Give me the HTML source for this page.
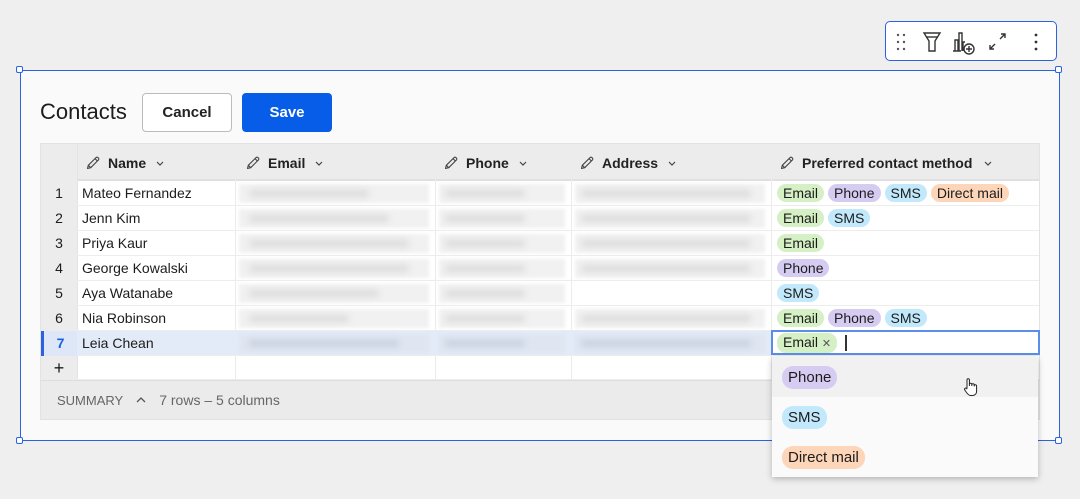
<!DOCTYPE html>
<html><head><style>
*{box-sizing:border-box;margin:0;padding:0}
body{width:1080px;height:499px;background:#efefef;font-family:"Liberation Sans",sans-serif;position:relative;overflow:hidden;color:#1c1c1c}
.card{position:absolute;left:20px;top:70px;width:1040px;height:371px;background:#fafafa;border:1px solid #2a62e0}
.h{position:absolute;width:7px;height:7px;border:1px solid #2a62e0;background:#fff;border-radius:2px}
.tb{position:absolute;left:885px;top:21px;width:172px;height:40px;background:#fff;border:1px solid #2a62e0;border-radius:5px}
.abs{position:absolute}
.title{left:40px;top:99px;font-size:22px;color:#1c1c1c}
.btn{top:93px;height:39px;border-radius:4px;font-size:15px;font-weight:bold;display:flex;align-items:center;justify-content:center}
.grid{position:absolute;left:40px;top:143px;width:1000px;height:277px;background:#fff;border:1px solid #e2e2e2}
.hdr{position:absolute;left:0;top:0;width:998px;height:37px;background:#ececec;border-bottom:2px solid #e0e0e0}
.hc{position:absolute;top:0;height:37px;display:flex;align-items:center;font-size:14px;font-weight:bold;color:#222}
.hc svg{margin-right:7px}
.hc .cv{margin-left:9px;margin-right:0}
.vl{position:absolute;top:0;width:1px;height:236px;background:#ececec}
.rn{position:absolute;left:0;width:36px;background:#ececec;text-align:center;font-size:14px}
.row{position:absolute;left:0;width:998px;height:25px;border-bottom:1px solid #ededed}
.cell{position:absolute;font-size:14px;line-height:25px}
.bl{position:absolute;height:19px;background:#f1f1f1;filter:blur(1.5px)}
.bl i{position:absolute;top:6px;height:7px;background:#dcdcdc;filter:blur(3px);border-radius:3px}
.t{display:inline-block;font-size:14px;line-height:18px;padding:0 6px;border-radius:9px;margin-right:4px}
.e{background:#d4f0c4}.p{background:#d6ccf2}.s{background:#c1e8fb}.d{background:#fdd5b8}
.sum{position:absolute;left:0;top:236px;width:998px;height:39px;background:#ebebeb;border-top:1px solid #ddd;font-size:14px;color:#666;display:flex;align-items:center}
.dd{position:absolute;left:772px;top:357px;width:266px;height:120px;background:#fafafa;box-shadow:0 2px 6px rgba(0,0,0,.25)}
.it{height:40px;display:flex;align-items:center;padding-left:10px}
.it .t{font-size:15px;line-height:23px;border-radius:11px;padding:0 6px}
</style></head><body>
<svg width="0" height="0" style="position:absolute"><defs>
<symbol id="pen" viewBox="0 0 16 16"><path d="M2.5 13.5l.8-3.2L11 2.6a1.4 1.4 0 012 0l.4.4a1.4 1.4 0 010 2L5.7 12.7zM10 3.6l2.4 2.4M3.3 10.3l2.4 2.4" fill="none" stroke="#444" stroke-width="1.1" stroke-linejoin="round"/></symbol>
<symbol id="cv" viewBox="0 0 10 10"><path d="M2 4l3 3 3-3" fill="none" stroke="#444" stroke-width="1.2"/></symbol>
</defs></svg>
<div class="card"></div>
<div class="h" style="left:16px;top:66px"></div><div class="h" style="left:1055px;top:66px"></div>
<div class="h" style="left:16px;top:437px"></div><div class="h" style="left:1055px;top:437px"></div>
<div class="tb">
<svg width="172" height="40" viewBox="0 0 172 40" fill="none" stroke="#333" stroke-width="1.4">
<g fill="#555" stroke="none"><circle cx="12" cy="13" r="1.2"/><circle cx="18" cy="13" r="1.2"/><circle cx="12" cy="20" r="1.2"/><circle cx="18" cy="20" r="1.2"/><circle cx="12" cy="27" r="1.2"/><circle cx="18" cy="27" r="1.2"/></g>
<path d="M38 11h16l-5 8v10h-6V19z"/><path d="M40 15h12"/>
<path d="M69 29V18h3v11M73 29V11h3v18M77 29v-9h2M67 29h8"/><circle cx="83" cy="27" r="5"/><path d="M83 24v6M80 27h6"/>
<path d="M109 22l-5 5M104 23v4h4M114 17l5-5M115 12h4v4"/>
<g fill="#333" stroke="none"><circle cx="150" cy="13" r="1.4"/><circle cx="150" cy="20" r="1.4"/><circle cx="150" cy="27" r="1.4"/></g>
</svg></div>
<div class="abs title">Contacts</div>
<div class="abs btn" style="left:142px;width:90px;border:1px solid #bbb;background:#fff;color:#222">Cancel</div>
<div class="abs btn" style="left:242px;width:90px;background:#075de8;color:#fff">Save</div>
<div class="grid">
<div class="hdr"></div>
<div class="vl" style="left:36px;background:#e4e4e4"></div>
<div class="vl" style="left:194px"></div><div class="vl" style="left:394px"></div><div class="vl" style="left:530px"></div><div class="vl" style="left:730px"></div>
<div class="rn" style="top:0;height:236px"></div>
<div class="hc" style="left:44px"><svg width="16" height="16"><use href="#pen"/></svg>Name<svg class="cv" width="10" height="10"><use href="#cv"/></svg></div>
<div class="hc" style="left:204px"><svg width="16" height="16"><use href="#pen"/></svg>Email<svg class="cv" width="10" height="10"><use href="#cv"/></svg></div>
<div class="hc" style="left:402px"><svg width="16" height="16"><use href="#pen"/></svg>Phone<svg class="cv" width="10" height="10"><use href="#cv"/></svg></div>
<div class="hc" style="left:538px"><svg width="16" height="16"><use href="#pen"/></svg>Address<svg class="cv" width="10" height="10"><use href="#cv"/></svg></div>
<div class="hc" style="left:738px"><svg width="16" height="16"><use href="#pen"/></svg>Preferred contact method<svg class="cv" width="10" height="10" style="margin-left:11px"><use href="#cv"/></svg></div>

<div class="row" style="top:37px"><div class="rn" style="line-height:25px">1</div><div class="cell" style="left:41px">Mateo Fernandez</div><div class="bl" style="left:198px;top:3px;width:190px"><i style="left:10px;width:120px"></i></div><div class="bl" style="left:398px;top:3px;width:126px"><i style="left:6px;width:80px"></i></div><div class="bl" style="left:534px;top:3px;width:190px"><i style="left:6px;width:170px"></i></div><div class="cell" style="left:736px"><span class="t e">Email</span><span class="t p">Phone</span><span class="t s">SMS</span><span class="t d">Direct mail</span></div></div>
<div class="row" style="top:62px"><div class="rn" style="line-height:25px">2</div><div class="cell" style="left:41px">Jenn Kim</div><div class="bl" style="left:198px;top:3px;width:190px"><i style="left:10px;width:140px"></i></div><div class="bl" style="left:398px;top:3px;width:126px"><i style="left:6px;width:80px"></i></div><div class="bl" style="left:534px;top:3px;width:190px"><i style="left:6px;width:170px"></i></div><div class="cell" style="left:736px"><span class="t e">Email</span><span class="t s">SMS</span></div></div>
<div class="row" style="top:87px"><div class="rn" style="line-height:25px">3</div><div class="cell" style="left:41px">Priya Kaur</div><div class="bl" style="left:198px;top:3px;width:190px"><i style="left:10px;width:160px"></i></div><div class="bl" style="left:398px;top:3px;width:126px"><i style="left:6px;width:80px"></i></div><div class="bl" style="left:534px;top:3px;width:190px"><i style="left:6px;width:170px"></i></div><div class="cell" style="left:736px"><span class="t e">Email</span></div></div>
<div class="row" style="top:112px"><div class="rn" style="line-height:25px">4</div><div class="cell" style="left:41px">George Kowalski</div><div class="bl" style="left:198px;top:3px;width:190px"><i style="left:10px;width:160px"></i></div><div class="bl" style="left:398px;top:3px;width:126px"><i style="left:6px;width:80px"></i></div><div class="bl" style="left:534px;top:3px;width:190px"><i style="left:6px;width:170px"></i></div><div class="cell" style="left:736px"><span class="t p">Phone</span></div></div>
<div class="row" style="top:137px"><div class="rn" style="line-height:25px">5</div><div class="cell" style="left:41px">Aya Watanabe</div><div class="bl" style="left:198px;top:3px;width:190px"><i style="left:10px;width:130px"></i></div><div class="bl" style="left:398px;top:3px;width:126px"><i style="left:6px;width:80px"></i></div><div class="cell" style="left:736px"><span class="t s">SMS</span></div></div>
<div class="row" style="top:162px"><div class="rn" style="line-height:25px">6</div><div class="cell" style="left:41px">Nia Robinson</div><div class="bl" style="left:198px;top:3px;width:190px"><i style="left:10px;width:100px"></i></div><div class="bl" style="left:398px;top:3px;width:126px"><i style="left:6px;width:80px"></i></div><div class="bl" style="left:534px;top:3px;width:190px"><i style="left:6px;width:170px"></i></div><div class="cell" style="left:736px"><span class="t e">Email</span><span class="t p">Phone</span><span class="t s">SMS</span></div></div>
<div class="row" style="top:187px;background:#e3ebf8"><div class="rn" style="line-height:25px;background:#dde7f7;color:#1a5fe0;font-weight:bold;border-left:3px solid #2a62e0">7</div><div class="cell" style="left:41px">Leia Chean</div><div class="bl" style="left:198px;top:3px;width:190px;background:#dfe6f2"><i style="left:10px;width:150px;background:#c9d1de"></i></div><div class="bl" style="left:398px;top:3px;width:126px;background:#dfe6f2"><i style="left:6px;width:80px;background:#c9d1de"></i></div><div class="bl" style="left:534px;top:3px;width:190px;background:#dfe6f2"><i style="left:6px;width:170px;background:#c9d1de"></i></div>
<div style="position:absolute;left:730px;top:-1px;width:269px;height:25px;background:#fff;border:2px solid #5b8ee8"><div class="cell" style="left:4px;top:-2px"><span class="t e">Email <span style="font-size:11px;color:#555">✕</span></span><span style="display:inline-block;width:2px;height:16px;background:#333;vertical-align:middle;margin-left:4px"></span></div></div></div>
<div class="row" style="top:212px;height:24px"><div class="rn" style="line-height:24px;font-size:18px">+</div></div>
<div class="sum"><span style="margin-left:16px;font-size:13px">SUMMARY</span><svg width="12" height="10" style="margin-left:12px"><path d="M2 7l4-4 4 4" fill="none" stroke="#555" stroke-width="1.3"/></svg><span style="margin-left:12px">7 rows – 5 columns</span></div>
</div>
<div class="dd">
<div class="it" style="background:#f1f1f1"><span class="t p">Phone</span></div>
<div class="it"><span class="t s">SMS</span></div>
<div class="it"><span class="t d">Direct mail</span></div>
</div>
<svg class="abs" style="left:962px;top:377px" width="18" height="20" viewBox="0 0 18 20"><path d="M5 11V3a1.2 1.2 0 012.4 0v6V7.5a1.2 1.2 0 012.4 0V9 8a1.2 1.2 0 012.4 0v1.5-.5a1.2 1.2 0 012.4 0V14c0 3-2 4.5-4.5 4.5h-1.5C7 18.5 6 17.5 4.5 15.5L2.8 13a1.2 1.2 0 012-1.4z" fill="#fff" stroke="#222" stroke-width="1"/></svg>
</body></html>
